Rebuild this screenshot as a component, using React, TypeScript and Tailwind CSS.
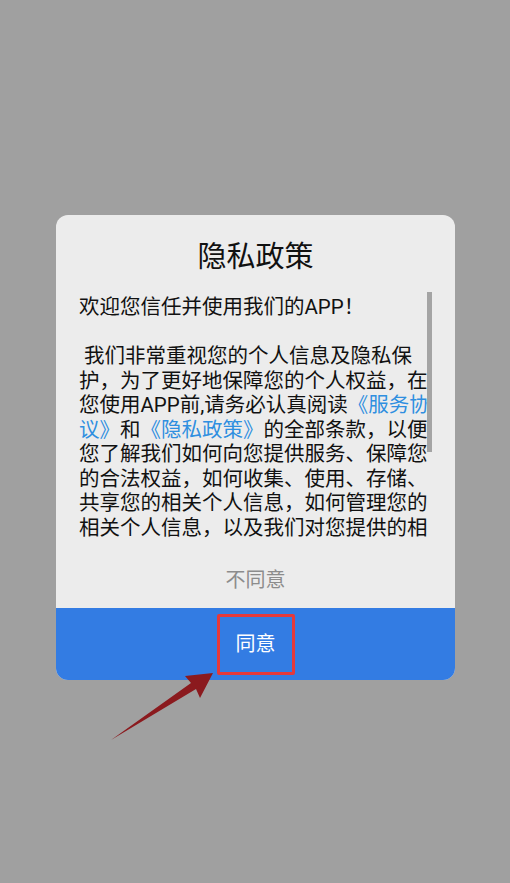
import React from "react";

const font = { fontFamily: 'Roboto, "Noto Sans CJK SC", sans-serif' };

function L({ children }: { children?: React.ReactNode }) {
  return <div className="whitespace-pre h-[24.5px] leading-[24.5px]">{children}</div>;
}

function B({ children }: { children: React.ReactNode }) {
  return <span className="text-[#2f8fe0]">{children}</span>;
}

export default function App() {
  return (
    <div
      className="relative w-[510px] h-[883px] bg-[#a0a0a0] pt-[215px] pl-[56px] overflow-hidden"
      style={font}
    >
      <div className="w-[399px] h-[465px] rounded-[12px] overflow-hidden bg-[#ececec] flex flex-col">
        <div className="pt-[24px] h-[77px] text-center text-[29px] leading-[36px] text-[#111]">
          隐私政策
        </div>
        <div className="relative h-[248px]">
          <div className="ml-[23px] w-[351px] h-full overflow-hidden pt-[3px] text-[20.5px] text-[#111]">
            <L>欢迎您信任并使用我们的APP！</L>
            <L> </L>
            <L> 我们非常重视您的个人信息及隐私保</L>
            <L>护，为了更好地保障您的个人权益，在</L>
            <L>
              您使用APP前,请务必认真阅读<B>《服务协</B>
            </L>
            <L>
              <B>议》</B>和<B>《隐私政策》</B>的全部条款，以便
            </L>
            <L>您了解我们如何向您提供服务、保障您</L>
            <L>的合法权益，如何收集、使用、存储、</L>
            <L>共享您的相关个人信息，如何管理您的</L>
            <L>相关个人信息，以及我们对您提供的相</L>
          </div>
          <div className="absolute top-0 left-[371px] w-[5px] h-[160px] bg-[#a4a4a4]" />
        </div>
        <div className="h-[68px] pt-[28px] text-center text-[20px] leading-[24px] text-[#8c8c8c]">
          不同意
        </div>
        <div className="h-[72px] bg-[#337ce3] flex items-center justify-center">
          <div className="w-[78px] h-[61px] border-[3px] border-[#e5393b] rounded-[2px] flex items-center justify-center text-white text-[20px] leading-[24px]">
            同意
          </div>
        </div>
      </div>
      <svg
        className="absolute left-0 top-0"
        width="510"
        height="883"
        viewBox="0 0 510 883"
      >
        <polygon
          points="213,673 185,676 191,683 111,740 196,689 200,698"
          fill="#8b1a1e"
        />
      </svg>
    </div>
  );
}
